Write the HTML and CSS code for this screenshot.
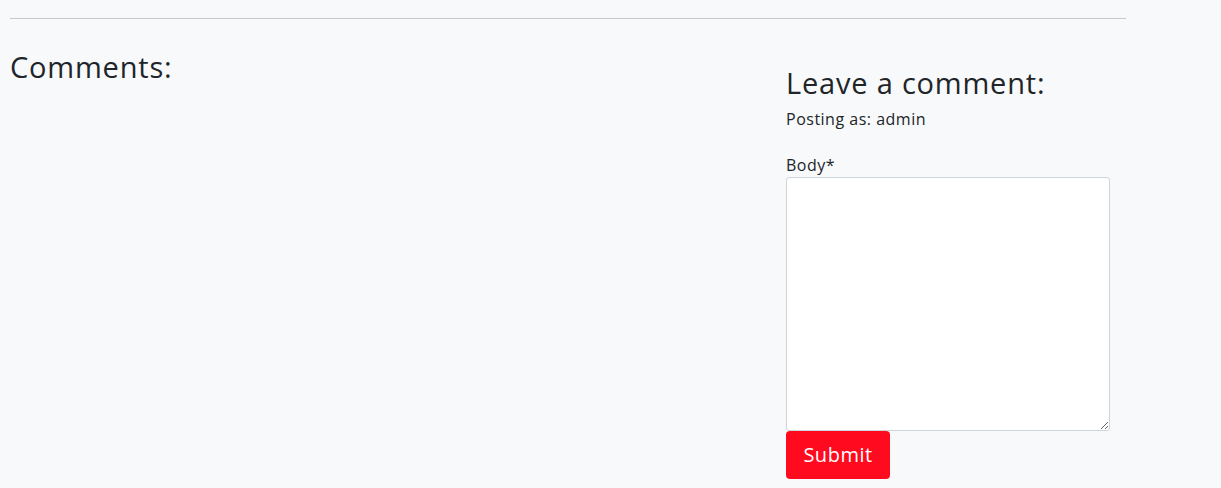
FILE: index.html
```html
<!DOCTYPE html>
<html lang="en">
<head>
<meta charset="utf-8">
<title>Comments</title>
<link rel="stylesheet" href="styles.css">
</head>
<body>
<div class="container">
  <hr class="divider">
  <div class="row">
    <div class="col-main">
      <h3 class="heading">Comments:</h3>
    </div>
    <div class="col-side">
      <div class="card-body">
        <h3 class="heading">Leave a comment:</h3>
        <p class="posting">Posting as: admin</p>
        <form class="comment-form">
          <label class="form-label" for="body">Body*</label>
          <textarea id="body" class="form-control"></textarea>
          <button type="button" class="btn-submit">Submit</button>
        </form>
      </div>
    </div>
  </div>
</div>
</body>
</html>
```
FILE: styles.css
```css
html, body {
  margin: 0;
  padding: 0;
}
body {
  background: #f8f9fa;
  color: #212529;
  font-family: "Open Sans", "Liberation Sans", sans-serif;
  font-size: 16px;
  line-height: 1.5;
}
.container {
  width: 1116px;
  padding-left: 10px;
}
.divider {
  margin: 18px 0 0 0;
  border: 0;
  border-top: 1px solid #c8c9ca;
  height: 0;
}
.row {
  display: flex;
}
.col-main {
  width: 760px;
}
.col-side {
  width: 356px;
}
.card-body {
  padding: 0 16px;
}
.heading {
  margin: 0;
  font-size: 29px;
  font-weight: 500;
  line-height: 1.2;
  letter-spacing: 0.8px;
}
.col-main .heading {
  margin-top: 31px;
}
.col-side .card-body {
  margin-top: 47px;
}
.posting {
  margin: 6px 0 22px 0;
  letter-spacing: 0.5px;
}
.comment-form {
  display: flex;
  flex-direction: column;
  align-items: flex-start;
}
.form-label {
  margin-bottom: 0;
  letter-spacing: 0.5px;
}
.form-control {
  box-sizing: border-box;
  width: 324px;
  height: 254px;
  border: 1px solid #ced4da;
  border-radius: 3px;
  background: #fff;
  margin: 0;
  padding: 6px 12px;
  font: inherit;
}
.btn-submit {
  box-sizing: border-box;
  width: 104px;
  height: 48px;
  background: #ff0a1e;
  color: #fff;
  border: 0;
  border-radius: 4px;
  font-family: inherit;
  font-size: 20px;
  font-weight: 500;
  letter-spacing: 0.5px;
  padding: 0;
  cursor: pointer;
}
```
